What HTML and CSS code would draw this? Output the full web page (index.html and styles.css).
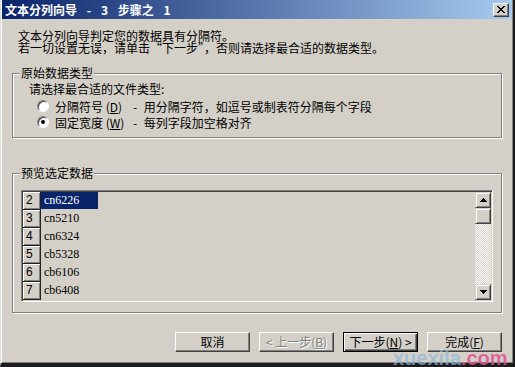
FILE: index.html
```html
<!DOCTYPE html>
<html lang="zh-CN">
<head>
<meta charset="utf-8">
<title>文本分列向导</title>
<link rel="stylesheet" href="styles.css">
</head>
<body>
<div class="dlg">
  <div class="titlebar">
    <span class="title">文本分列向导 - 3 步骤之 1</span>
    <span class="close"><svg width="8" height="7" viewBox="0 0 8 7"><path d="M0 0h2v1h1v1h2V1h1V0h2v1H7v1H6v1H5v1h1v1h1v1h1v1H6V6H5V5H3v1H2v1H0V6h1V5h1V4h1V3H2V2H1V1H0z" fill="#000"/></svg></span>
  </div>
  <div class="content">
    <p class="intro">文本分列向导判定您的数据具有分隔符。<br>若一切设置无误，请单击“下一步”，否则请选择最合适的数据类型。</p>
    <fieldset class="group g1">
      <legend>原始数据类型</legend>
      <div class="gbody">
        <div class="prompt">请选择最合适的文件类型:</div>
        <div class="radio"><span class="rb"></span><span class="rl">分隔符号 (<u>D</u>)</span><span class="rd">- 用分隔字符，如逗号或制表符分隔每个字段</span></div>
        <div class="radio"><span class="rb on"></span><span class="rl">固定宽度 (<u>W</u>)</span><span class="rd">- 每列字段加空格对齐</span></div>
      </div>
    </fieldset>
    <fieldset class="group g2">
      <legend>预览选定数据</legend>
      <div class="gbody2">
        <div class="list">
          <div class="rows">
            <div class="row"><span class="rh">2</span><span class="cell sel">cn6226</span></div>
            <div class="row"><span class="rh">3</span><span class="cell">cn5210</span></div>
            <div class="row"><span class="rh">4</span><span class="cell">cn6324</span></div>
            <div class="row"><span class="rh">5</span><span class="cell">cb5328</span></div>
            <div class="row"><span class="rh">6</span><span class="cell">cb6106</span></div>
            <div class="row"><span class="rh">7</span><span class="cell">cb6408</span></div>
          </div>
          <div class="vscroll">
            <span class="sbtn"><svg width="7" height="4" viewBox="0 0 7 4"><path d="M3 0h1v1h1v1h1v1h1v1H0V3h1V2h1V1h1z" fill="#000"/></svg></span>
            <span class="thumb"></span>
            <span class="track"></span>
            <span class="sbtn"><svg width="7" height="4" viewBox="0 0 7 4"><path d="M0 0h7v1H6v1H5v1H4v1H3V3H2V2H1V1H0z" fill="#000"/></svg></span>
          </div>
        </div>
      </div>
    </fieldset>
    <div class="buttons">
      <span class="btn">取消</span>
      <span class="btn disabled">&lt; 上一步(<u>B</u>)</span>
      <span class="btn default">下一步(<u>N</u>) &gt;</span>
      <span class="btn">完成(<u>F</u>)</span>
    </div>
  </div>
  <div class="watermark"><span class="wm1">xuexila</span><span class="wm2">.com</span></div>
</div>
</body>
</html>
```
FILE: styles.css
```css
* { box-sizing: border-box; }
html, body { margin: 0; padding: 0; }
body {
  width: 515px;
  height: 367px;
  overflow: hidden;
  background: #d4d0c8;
  font-family: "Noto Sans CJK SC", "Noto Sans", sans-serif;
  font-size: 12px;
  color: #000;
}
.dlg {
  position: relative;
  width: 515px;
  height: 367px;
  background: #d4d0c8;
  border-left: 1px solid #dcdcdc;
  border-right: 2px solid #1c1c1c;
  border-bottom: 4px solid #1c1c1c;
  box-shadow: inset 1px 0 0 #fff, inset -1px -1px 0 #808080;
  display: flex;
  flex-direction: column;
}
.titlebar {
  height: 19px;
  margin: 0 1px;
  background: linear-gradient(to right, #0a246a, #a6caf0);
  display: flex;
  align-items: center;
  justify-content: space-between;
  padding: 0 3px 0 3px;
}
.title {
  color: #fff;
  font-weight: bold;
  font-size: 12px;
  line-height: 12px;
  white-space: pre;
  word-spacing: 7px;
}
.close {
  width: 16px;
  height: 14px;
  background: #d4d0c8;
  border: 1px solid;
  border-color: #fff #404040 #404040 #fff;
  box-shadow: inset -1px -1px 0 #808080;
  display: flex;
  align-items: center;
  justify-content: center;
}
.close svg { display: block; }
.content {
  padding: 11px 11px 0 11px;
  display: flex;
  flex-direction: column;
}
.intro {
  margin: 0 0 0 6px;
  line-height: 12px;
}
.group {
  margin: 0;
  padding: 0;
  min-width: 0;
  border: 1px solid #808080;
  box-shadow: inset 1px 1px 0 #fff, 1px 1px 0 #fff;
}
.group legend {
  margin-left: 7px;
  padding: 0 1px 0 1px;
  line-height: 12px;
  background: #d4d0c8;
}
.g1 { margin-top: 13px; }
.gbody { padding: 4px 0 7px 16px; }
.prompt { line-height: 12px; margin-bottom: 3px; }
.radio {
  display: flex;
  align-items: center;
  height: 16px;
  margin-left: 8px;
  white-space: nowrap;
}
.rb {
  position: relative;
  width: 12px;
  height: 12px;
  border-radius: 50%;
  background: #fff;
  border: 1px solid;
  border-color: #808080 #fff #fff #808080;
  box-shadow: inset 1px 1px 0 #404040;
  margin-right: 6px;
  flex: none;
}
.rb.on::after {
  content: "";
  position: absolute;
  left: 3px;
  top: 3px;
  width: 4px;
  height: 4px;
  border-radius: 50%;
  background: #000;
}
.rl { width: 78px; flex: none; }
.rd { word-spacing: 4px; }
.g2 { margin-top: 29px; }
.gbody2 { padding: 11px 8px 10px 8px; }
.list {
  height: 112px;
  display: flex;
  border: 1px solid;
  border-color: #808080 #fff #fff #808080;
  box-shadow: inset 1px 1px 0 #404040, inset -1px -1px 0 #d4d0c8;
  padding: 1px;
}
.rows { flex: 1; display: flex; flex-direction: column; }
.row { display: flex; height: 18px; }
.rh {
  width: 18px;
  height: 18px;
  flex: none;
  background: #d4d0c8;
  border-right: 1px solid #202020;
  border-bottom: 1px solid #202020;
  box-shadow: inset 1px 1px 0 #fff, inset -1px -1px 0 #808080;
  font-family: "Liberation Sans", Arial, sans-serif;
  font-size: 12px;
  line-height: 17px;
  padding-left: 3px;
}
.cell {
  font-family: "Liberation Serif", "Times New Roman", serif;
  font-size: 12px;
  line-height: 17px;
  height: 17px;
  padding-left: 3px;
  width: 57px;
}
.cell.sel { background: #0a246a; color: #fff; }
.vscroll {
  width: 16px;
  flex: none;
  display: flex;
  flex-direction: column;
}
.sbtn, .thumb {
  width: 16px;
  height: 16px;
  flex: none;
  background: #d4d0c8;
  border: 1px solid;
  border-color: #d4d0c8 #404040 #404040 #d4d0c8;
  box-shadow: inset 1px 1px 0 #fff, inset -1px -1px 0 #808080;
  display: flex;
  align-items: center;
  justify-content: center;
}
.sbtn svg { display: block; }
.track {
  flex: 1;
  background: repeating-conic-gradient(#fff 0 25%, #d4d0c8 0 50%) 0 0 / 2px 2px;
}
.buttons {
  margin-top: 19px;
  display: flex;
  justify-content: flex-end;
  gap: 9px;
}
.btn {
  width: 75px;
  height: 20px;
  background: #d4d0c8;
  border: 1px solid;
  border-color: #fff #404040 #404040 #fff;
  box-shadow: inset -1px -1px 0 #808080;
  display: flex;
  align-items: center;
  justify-content: center;
  line-height: 12px;
  white-space: pre;
}
.btn.default {
  border-color: #000;
  box-shadow: inset 1px 1px 0 #fff, inset -1px -1px 0 #404040, inset -2px -2px 0 #808080;
}
.btn.disabled { color: #808080; text-shadow: 1px 1px 0 #fff; }
.watermark {
  position: absolute;
  left: 392px;
  top: 350px;
  font-family: "Liberation Sans", Arial, sans-serif;
  font-weight: bold;
  font-size: 20px;
  line-height: 16px;
  white-space: nowrap;
}
.wm1 { color: rgba(140, 185, 218, 0.7); }
.wm2 { color: rgba(222, 80, 145, 0.85); }
```
